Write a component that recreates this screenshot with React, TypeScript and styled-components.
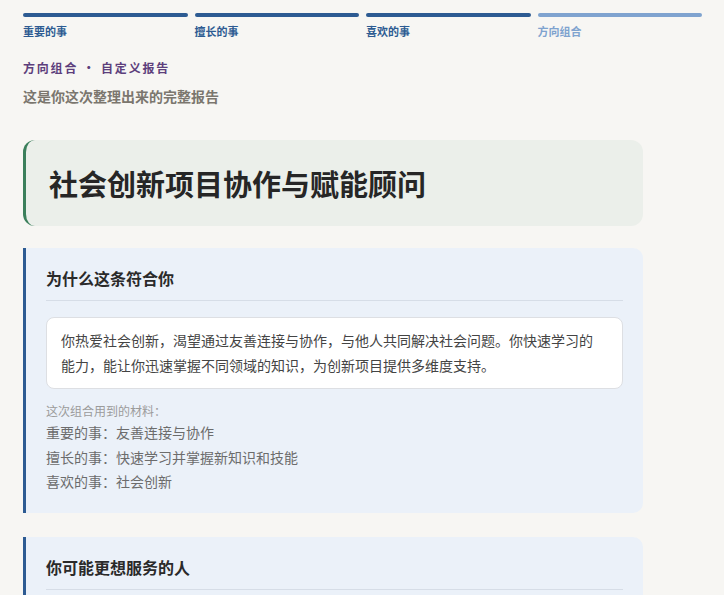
import React from 'react'
import styled, { createGlobalStyle } from 'styled-components'

const GlobalStyle = createGlobalStyle`
  html, body {
    margin: 0;
    padding: 0;
    background: #f7f6f3;
  }
  body {
    font-family: "Noto Sans CJK SC", "Noto Sans", sans-serif;
    color: #333;
  }
`

const Page = styled.div`
  padding: 13px 22px 40px 23px;
`

const Steps = styled.div`
  display: grid;
  grid-template-columns: repeat(4, 1fr);
  gap: 7px;
`

const Step = styled.div<{ $current?: boolean }>`
  display: flex;
  flex-direction: column;
  gap: 6px;

  &::before {
    content: '';
    display: block;
    height: 4px;
    border-radius: 2px;
    background: ${p => (p.$current ? '#7fa3cf' : '#2d5b92')};
  }

  span {
    font-size: 11px;
    font-weight: 700;
    line-height: 16px;
    color: ${p => (p.$current ? '#7fa3cf' : '#2d5b92')};
  }
`

const Header = styled.header`
  margin-top: 20px;
`

const Kicker = styled.div`
  font-size: 12px;
  font-weight: 700;
  letter-spacing: 1.8px;
  line-height: 18px;
  color: #5d3f7c;
`

const Lead = styled.div`
  margin-top: 9px;
  font-size: 14px;
  font-weight: 700;
  line-height: 20px;
  color: #7b766e;
`

const Cards = styled.div`
  max-width: 620px;
  margin-top: 34px;
  display: flex;
  flex-direction: column;
`

const TitleCard = styled.div`
  height: 86px;
  box-sizing: border-box;
  display: flex;
  align-items: center;
  padding: 0 23px;
  background: #ebefea;
  border-left: 3px solid #3b7f5b;
  border-radius: 12px;
  margin-bottom: 22px;

  h1 {
    margin: 0;
    font-size: 29px;
    font-weight: 700;
    line-height: 36px;
    color: #262626;
  }
`

const Section = styled.section`
  background: #ebf1f9;
  border-left: 3px solid #2d5b92;
  border-radius: 0 10px 10px 0;
  padding: 19px 20px 19px;
  margin-bottom: 24px;
`

const SectionTitle = styled.h2`
  margin: 0;
  padding-bottom: 11px;
  border-bottom: 1px solid #d6dde7;
  font-size: 16px;
  font-weight: 700;
  line-height: 22px;
  color: #2a2a2a;
`

const Quote = styled.div`
  margin-top: 16px;
  background: #fff;
  border: 1px solid #dddfe3;
  border-radius: 8px;
  padding: 10px 26px 10px 14px;
  font-size: 14px;
  line-height: 25px;
  color: #444;
`

const Materials = styled.div`
  margin-top: 13px;
`

const MaterialsLabel = styled.div`
  font-size: 12px;
  line-height: 18px;
  color: #9b9b9b;
`

const MaterialList = styled.ul`
  list-style: none;
  margin: 0;
  padding: 0;

  li {
    font-size: 14px;
    line-height: 24.5px;
    color: #6c6c6c;
  }
`

const steps = ['重要的事', '擅长的事', '喜欢的事', '方向组合']

export default function App() {
  return (
    <>
      <GlobalStyle />
      <Page>
        <Steps>
          {steps.map((s, i) => (
            <Step key={s} $current={i === steps.length - 1}>
              <span>{s}</span>
            </Step>
          ))}
        </Steps>

        <Header>
          <Kicker>方向组合 · 自定义报告</Kicker>
          <Lead>这是你这次整理出来的完整报告</Lead>
        </Header>

        <Cards>
          <TitleCard>
            <h1>社会创新项目协作与赋能顾问</h1>
          </TitleCard>

          <Section>
            <SectionTitle>为什么这条符合你</SectionTitle>
            <Quote>
              你热爱社会创新，渴望通过友善连接与协作，与他人共同解决社会问题。你快速学习的能力，能让你迅速掌握不同领域的知识，为创新项目提供多维度支持。
            </Quote>
            <Materials>
              <MaterialsLabel>这次组合用到的材料：</MaterialsLabel>
              <MaterialList>
                <li>重要的事：友善连接与协作</li>
                <li>擅长的事：快速学习并掌握新知识和技能</li>
                <li>喜欢的事：社会创新</li>
              </MaterialList>
            </Materials>
          </Section>

          <Section>
            <SectionTitle>你可能更想服务的人</SectionTitle>
            <Quote>
              关注社会议题、希望推动改变的团队与个人，他们需要有人帮助连接资源、梳理方法，让创新想法真正落地。
            </Quote>
          </Section>
        </Cards>
      </Page>
    </>
  )
}
